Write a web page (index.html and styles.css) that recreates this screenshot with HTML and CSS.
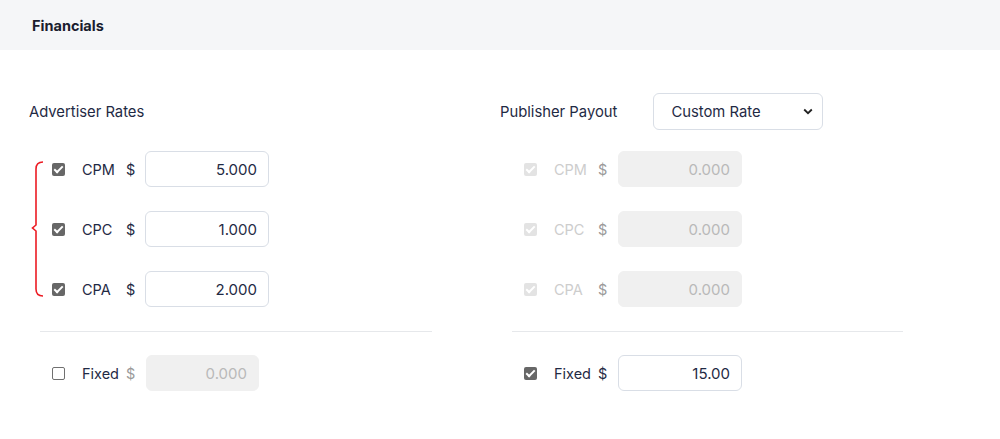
FILE: index.html
```html
<!DOCTYPE html>
<html>
<head>
<meta charset="utf-8">
<link rel="stylesheet" href="styles.css">
</head>
<body>
<div class="header">Financials</div>
<div class="main">
  <div class="col">
    <div class="title-row"><span class="title">Advertiser Rates</span></div>
    <div class="rates">
      <svg class="bracket" width="14" height="140" viewBox="0 0 14 140"><path d="M12 2 Q5 2 5 9 L5 65 L1.5 68 L5 71 L5 129 Q5 136 12 136" fill="none" stroke="#ec1c24" stroke-width="1.6"/></svg>
      <div class="row"><span class="cb on"></span><span class="lbl">CPM</span><span class="cur">$</span><span class="inp">5.000</span></div>
      <div class="row"><span class="cb on"></span><span class="lbl">CPC</span><span class="cur">$</span><span class="inp">1.000</span></div>
      <div class="row"><span class="cb on"></span><span class="lbl">CPA</span><span class="cur">$</span><span class="inp">2.000</span></div>
    </div>
    <div class="sep"></div>
    <div class="row fixed"><span class="cb off"></span><span class="lbl">Fixed</span><span class="cur dim">$</span><span class="inp dis short">0.000</span></div>
  </div>
  <div class="col right">
    <div class="title-row"><span class="title">Publisher Payout</span>
      <div class="select"><span>Custom Rate</span><svg width="10" height="7" viewBox="0 0 10 7"><path d="M1.2 1.5 L5 5.2 L8.8 1.5" fill="none" stroke="#222" stroke-width="1.8"/></svg></div>
    </div>
    <div class="rates">
      <div class="row"><span class="cb dison"></span><span class="lbl faded">CPM</span><span class="cur dim">$</span><span class="inp dis">0.000</span></div>
      <div class="row"><span class="cb dison"></span><span class="lbl faded">CPC</span><span class="cur dim">$</span><span class="inp dis">0.000</span></div>
      <div class="row"><span class="cb dison"></span><span class="lbl faded">CPA</span><span class="cur dim">$</span><span class="inp dis">0.000</span></div>
    </div>
    <div class="sep"></div>
    <div class="row fixed"><span class="cb on"></span><span class="lbl">Fixed</span><span class="cur">$</span><span class="inp">15.00</span></div>
  </div>
</div>
</body>
</html>
```
FILE: styles.css
```css
* { box-sizing: border-box; }
body { margin: 0; background: #fff; font-family: "Inter", "Liberation Sans", sans-serif; color: #1f2a44; }
.header { height: 50px; background: #f5f6f8; padding-left: 32px; display: flex; align-items: center; font-weight: 700; font-size: 14.5px; color: #1a1d2e; }
.main { display: flex; padding: 43px 0 0 29px; }
.col { width: 471px; position: relative; }
.title-row { height: 37px; display: flex; align-items: center; }
.title { font-size: 14.8px; }
.right .title { margin-right: 36px; }
.select { width: 170px; height: 37px; border: 1px solid #d9dee6; border-radius: 6px; display: flex; align-items: center; justify-content: space-between; padding: 0 9px 0 17px; font-size: 14.8px; color: #1f2a44; }
.rates { position: relative; padding-top: 21px; display: flex; flex-direction: column; gap: 24px; }
.bracket { position: absolute; left: 2px; top: 30px; }
.row { display: flex; align-items: center; height: 36px; padding-left: 23px; font-size: 14.5px; }
.right .row { padding-left: 24px; }
.cb { width: 13px; height: 13px; border-radius: 2px; margin-right: 17px; flex: none; position: relative; }
.cb.on, .cb.dison { background: #676767; }
.cb.dison { background: #e3e3e3; }
.cb.on::after, .cb.dison::after { content: ""; position: absolute; left: 4px; top: 1.5px; width: 3px; height: 7px; border: solid #fff; border-width: 0 2px 2px 0; transform: rotate(45deg); }
.cb.off { border: 1.5px solid #707070; background: #fff; }
.lbl { width: 44px; }
.lbl.faded { color: #cdcdcd; }
.cur { width: 19px; }
.right .cur { width: 20px; }
.cur.dim { color: #9a9a9a; }
.inp { width: 124px; height: 36px; border: 1px solid #d9dee6; border-radius: 6px; display: flex; align-items: center; justify-content: flex-end; padding-right: 11px; font-size: 15px; color: #1f2a44; }
.inp.dis { background: #f0f0f0; border-color: #f0f0f0; color: #b9b9b9; }
.inp.short { width: 113px; margin-left: 1px; }
.sep { height: 1px; background: #e6e8eb; margin: 24px 68px 0 11px; }
.right .sep { margin-left: 12px; }
.fixed { margin-top: 23px; }
```
